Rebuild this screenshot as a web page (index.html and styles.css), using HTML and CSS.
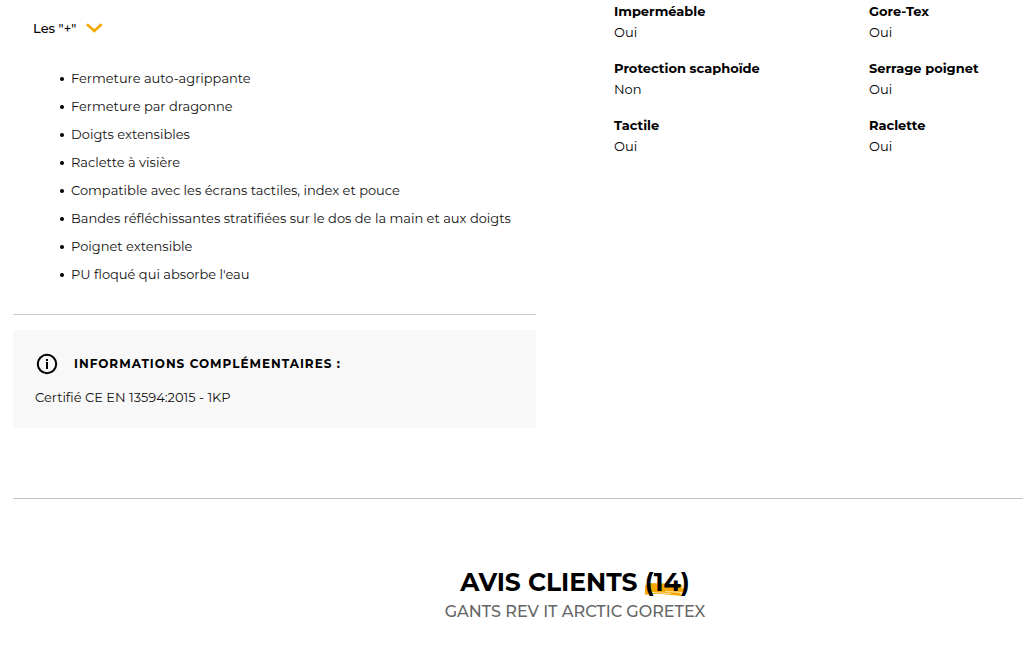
FILE: index.html
```html
<!DOCTYPE html>
<html lang="fr">
<head>
    <meta charset="utf-8">
    <meta name="viewport" content="width=device-width, initial-scale=1">
    <title>Gants Rev It Arctic Goretex</title>
    <link rel="stylesheet" href="styles.css">
</head>
<body>
    <main class="product">
        <div class="product-details">
            <!-- Description -->
            <section class="description">
                <button class="toggle" type="button" aria-expanded="true" aria-controls="plus-list">
                    Les "+"
                    <svg class="chevron" viewBox="0 0 16 10" aria-hidden="true">
                        <path d="M1 1.300 8.300 8 15.600 1.300"/>
                    </svg>
                </button>
                <ul class="plus-list" id="plus-list">
                    <li>Fermeture auto-agrippante</li>
                    <li>Fermeture par dragonne</li>
                    <li>Doigts extensibles</li>
                    <li>Raclette à visière</li>
                    <li>Compatible avec les écrans tactiles, index et pouce</li>
                    <li>Bandes réfléchissantes stratifiées sur le dos de la main et aux doigts</li>
                    <li>Poignet extensible</li>
                    <li>PU floqué qui absorbe l'eau</li>
                </ul>

                <div class="info-box">
                    <h3 class="info-title">
                        <svg class="info-icon" viewBox="0 0 22 22" aria-hidden="true">
                            <circle cx="11" cy="11" r="9.2"/>
                            <path d="M11 9V16M11 6V8"/>
                        </svg>
                        Informations complémentaires :
                    </h3>
                    <p>Certifié CE EN 13594:2015 - 1KP</p>
                </div>
            </section>

            <!-- Features -->
            <dl class="features">
                <div><dt>Imperméable</dt><dd>Oui</dd></div>
                <div><dt>Gore-Tex</dt><dd>Oui</dd></div>
                <div><dt>Protection scaphoïde</dt><dd>Non</dd></div>
                <div><dt>Serrage poignet</dt><dd>Oui</dd></div>
                <div><dt>Tactile</dt><dd>Oui</dd></div>
                <div><dt>Raclette</dt><dd>Oui</dd></div>
            </dl>
        </div>

        <!-- Reviews -->
        <section class="reviews">
            <h2>Avis clients
                <span class="count">
                    <svg class="brush" viewBox="0 0 44 15" preserveAspectRatio="none" aria-hidden="true">
                        <path d="M0 4 3 1 34 2 37 4 35 6 42 7 39 9 36 9 39 12 34 11 36 14 26 13 15 12 4 12 0 13Z"/>
                        <path class="streak" d="M7 10.500 25 11.500M20 9.500 37 10.500"/>
                    </svg>(14)</span>
            </h2>
            <p>GANTS REV IT ARCTIC GORETEX</p>
        </section>
    </main>
</body>
</html>
```
FILE: styles.css
```css
* {
    box-sizing: border-box;
}

body {
    margin: 0;
    background: #fff;
    color: #000;
    font-family: Montserrat, Inter, "Open Sans", sans-serif;
    font-size: 13px;
    line-height: 20px;
}

h2,
h3,
p,
ul,
dl,
dd {
    margin: 0;
}

.product {
    padding-left: 13px;
}

/* Two columns: description and features */
.product-details {
    display: grid;
    grid-template-columns: 523fr 409fr;
    column-gap: 78px;
    align-items: start;
    padding-bottom: 70px;
    border-bottom: 1px solid #c4c4c4;
}

/* Description */
.toggle {
    display: flex;
    align-items: center;
    gap: 10px;
    margin: 18px 0 0 20px;
    padding: 0;
    border: none;
    background: none;
    color: #000;
    font: inherit;
    font-weight: 500;
    cursor: pointer;
}

.chevron {
    width: 16px;
    height: 10px;
    fill: none;
    stroke: #f5a800;
    stroke-width: 2.6;
    overflow: visible;
}

.plus-list {
    padding: 26px 0 26px 47px;
    border-bottom: 1px solid #ccc;
    color: #111;
    line-height: 28px;
    list-style: none;
}

.plus-list li {
    display: flex;
    align-items: center;
    gap: 7px;
}

.plus-list li::before {
    content: "";
    width: 4px;
    height: 4px;
    margin-top: 2px;
    border-radius: 50%;
    background: #000;
}

.info-box {
    margin-top: 15px;
    padding: 23px 22px 21px;
    background: #f8f8f8;
    color: #111;
}

.info-title {
    display: flex;
    align-items: center;
    gap: 16px;
    margin-bottom: 12px;
    color: #000;
    font-size: 12px;
    font-weight: 700;
    letter-spacing: 1px;
    text-transform: uppercase;
}

.info-icon {
    width: 22px;
    height: 22px;
    margin-left: 1px;
    fill: none;
    stroke: #000;
    stroke-width: 2;
}

/* Features */
.features {
    display: grid;
    grid-template-columns: 255fr 154fr;
    row-gap: 15px;
    padding-top: 1px;
    line-height: 21px;
}

.features dt {
    font-weight: 700;
}

/* Reviews */
.reviews {
    padding: 67px 0 26px 114px;
    text-align: center;
}

.reviews h2 {
    font-size: 25px;
    line-height: 32px;
    text-transform: uppercase;
}

.reviews p {
    color: #666;
    font-size: 16px;
    font-weight: 500;
    line-height: 28px;
}

.count {
    position: relative;
    z-index: 0;
}

/* Brush stroke lying under the number */
.brush {
    position: absolute;
    z-index: -1;
    left: 0;
    bottom: 0;
    width: 100%;
    height: 15px;
    fill: #f5a800;
}

.streak {
    fill: none;
    stroke: #fff;
    opacity: 0.7;
}
```
